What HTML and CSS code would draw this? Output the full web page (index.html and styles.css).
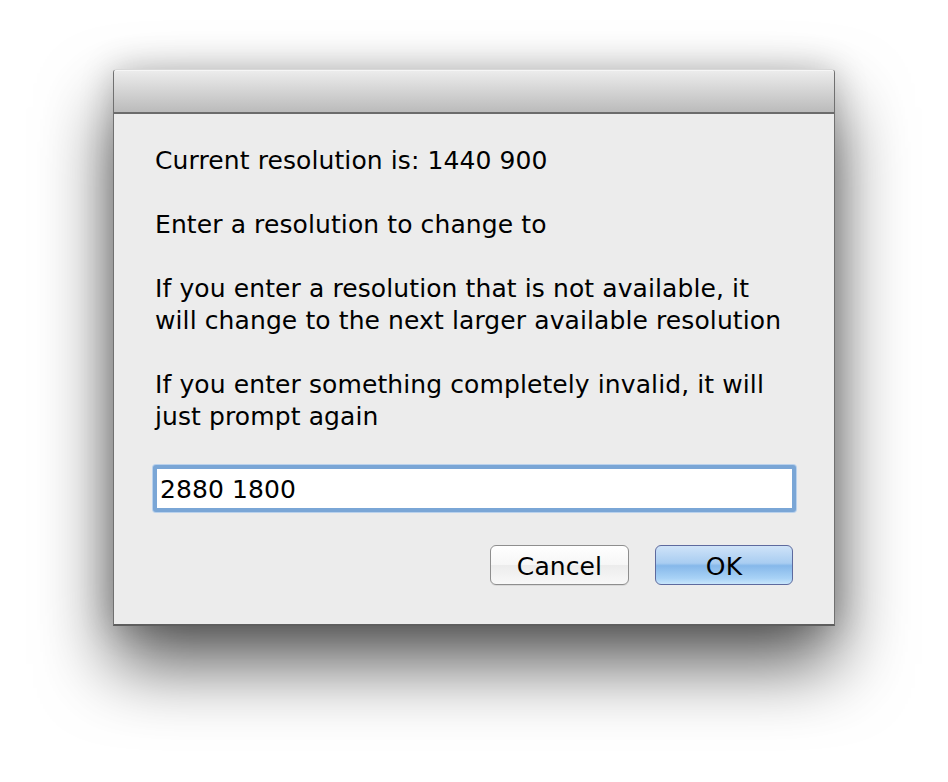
FILE: index.html
```html
<!DOCTYPE html>
<html>
<head>
<meta charset="utf-8">
<link rel="stylesheet" href="styles.css">
</head>
<body>
<div class="stage">
  <div class="window">
    <div class="titlebar"></div>
    <div class="content">
      <p class="msg">Current resolution is: 1440 900</p>
      <p class="msg">Enter a resolution to change to</p>
      <p class="msg">If you enter a resolution that is not available, it<br>will change to the next larger available resolution</p>
      <p class="msg">If you enter something completely invalid, it will<br>just prompt again</p>
      <div class="field"><span class="field-text">2880 1800</span></div>
      <div class="buttons">
        <div class="btn btn-cancel">Cancel</div>
        <div class="btn btn-ok">OK</div>
      </div>
    </div>
  </div>
</div>
</body>
</html>
```
FILE: styles.css
```css
html, body {
  margin: 0;
  padding: 0;
  background: #ffffff;
}
body {
  width: 948px;
  height: 782px;
  overflow: hidden;
  font-family: "DejaVu Sans", "Liberation Sans", sans-serif;
  letter-spacing: 0.1px;
}
.stage {
  padding: 69px 0 0 113px;
}
.window {
  width: 722px;
  height: 557px;
  box-sizing: border-box;
  background: #ececec;
  border: 1px solid #707070;
  border-top: 1px solid #d8d8d8;
  border-bottom: 2px solid #5e5e5e;
  border-radius: 4px 4px 0 0;
  box-shadow: 0 38px 72px rgba(0,0,0,0.66), 0 0 34px rgba(0,0,0,0.2);
  display: flex;
  flex-direction: column;
}
.titlebar {
  height: 44px;
  border-radius: 3px 3px 0 0;
  background: linear-gradient(#ececec, #bbbbbb);
  border-bottom: 2px solid #6b6b6b;
  border-top: 1px solid #f6f6f6;
  box-sizing: border-box;
}
.content {
  padding: 31px 40px 0 41px;
  color: #000;
  font-size: 25px;
  line-height: 32px;
}
.msg {
  margin: 0 0 32px 0;
  white-space: nowrap;
}
.field {
  margin-top: 16px;
  margin-left: -2px;
  width: 643px;
  height: 47px;
  box-sizing: border-box;
  border: 4px solid #7aa6d6;
  border-radius: 3px;
  background: #fff;
  box-shadow: 0 0 0 1px #b9d1ec;
  padding: 3px 0 0 3px;
  display: flex;
  align-items: center;
  font-size: 25px;
}
.buttons {
  display: flex;
  justify-content: flex-end;
  gap: 26px;
  margin-top: 33px;
  padding-right: 1px;
}
.btn {
  width: 139px;
  height: 40px;
  box-sizing: border-box;
  border-radius: 6px;
  display: flex;
  align-items: center;
  justify-content: center;
  padding-top: 3px;
  font-size: 25px;
}
.btn-cancel {
  border: 1px solid #8e8e8e;
  background: linear-gradient(#ffffff 0%, #f6f6f6 50%, #ececec 51%, #f8f8f8 100%);
  box-shadow: 0 1px 0 rgba(0,0,0,0.08);
}
.btn-ok {
  width: 138px;
  border: 1px solid #5e6a9e;
  background: linear-gradient(#cfe3f8 0%, #a9cdf1 45%, #86b8ea 52%, #a8d2f6 85%, #c8e6fb 100%);
}
```
